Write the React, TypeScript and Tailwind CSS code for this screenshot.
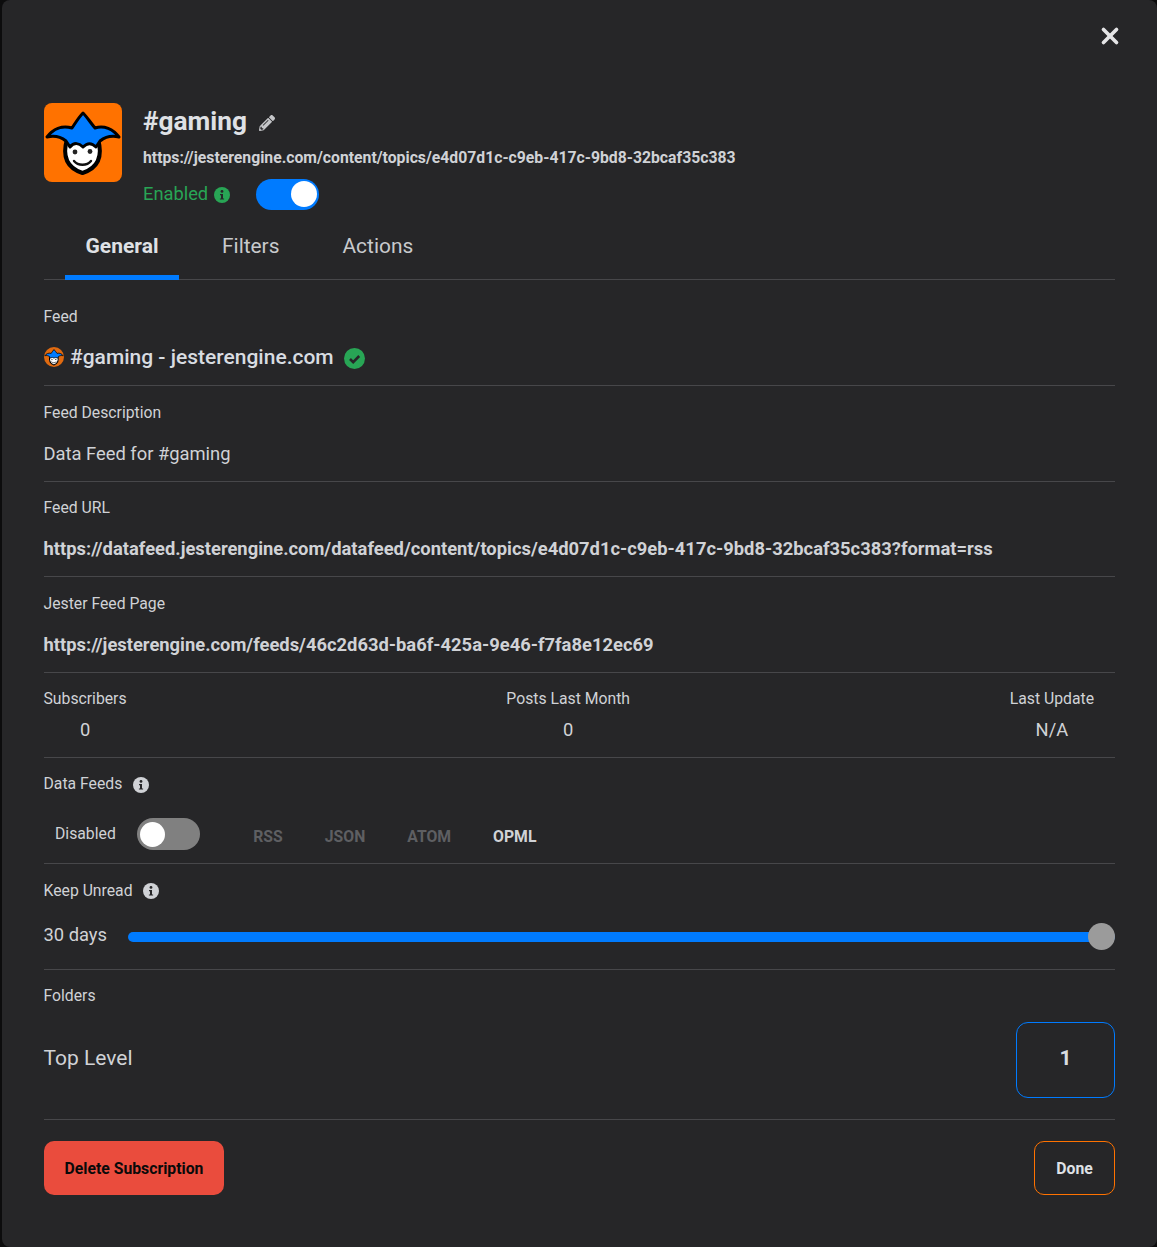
import React from "react";
import { X } from "lucide-react";
import { FaPencilAlt } from "react-icons/fa";

function Jester({ size = 78 }: { size?: number }) {
  return (
    <svg width={size} height={size} viewBox="0 0 78 78" className="block">
      <path d="M23 36 C19 50 20 64 38.5 70 C57 64 58 50 54 36 Z" fill="#fff" stroke="#000" strokeWidth="4" strokeLinejoin="round" />
      <path d="M3 34 C9 26 18 22 28 25 C32 19 35 14 39 10 C43 14 46 19 51 25 C60 22 69 26 75 34 C67 32 61 34 56 38 L52 44 C47 39 43 40 39 44 C35 40 30 39 26 44 L22 38 C17 34 11 32 3 34 Z" fill="#007bff" stroke="#000" strokeWidth="3" strokeLinejoin="round" />
      <circle cx="31" cy="49" r="2.4" fill="#222" />
      <circle cx="46" cy="48.5" r="2.4" fill="#222" />
      <path d="M30 58 C34 63 43 63 47 58" fill="none" stroke="#111" strokeWidth="2.4" strokeLinecap="round" />
    </svg>
  );
}

function Info({ color, size = 16 }: { color: string; size?: number }) {
  return (
    <svg width={size} height={size} viewBox="0 0 16 16" className="block shrink-0">
      <circle cx="8" cy="8" r="8" fill={color} />
      <circle cx="8" cy="4.4" r="1.4" fill="#262628" />
      <path d="M6 7h3v4.4h1.1v1.2H5.9v-1.2H7V8.2H6z" fill="#262628" />
    </svg>
  );
}

function Label({ children }: { children: React.ReactNode }) {
  return <div className="ml-[-0.5px] text-[15.75px] leading-[20px] text-[#d0d2d6]">{children}</div>;
}

function Row({ className, children }: { className: string; children: React.ReactNode }) {
  return <div className={`border-b border-[#47474a] ${className}`}>{children}</div>;
}

export default function App() {
  return (
    <div className="h-[1247px] w-[1157px] bg-[#0c0c0d] pl-[2px] font-['Roboto',sans-serif]">
      <div className="relative h-[1247px] rounded-[8px] bg-[#262628] px-[42px] text-[#dfe1e5]">
        <button className="absolute right-[34px] top-[23px] text-[#e4e4e6]">
          <X size={26} strokeWidth={3.4} />
        </button>

        <div className="h-[103px]" />
        <div className="flex h-[107px] gap-[21px]">
          <div className="h-[79px] w-[78px] overflow-hidden rounded-[8px] bg-[#ff7200]">
            <Jester />
          </div>
          <div className="flex flex-col">
            <div className="flex h-[36px] items-center">
              <span className="text-[26.25px] font-bold leading-[36px]">#gaming</span>
              <FaPencilAlt size={16} className="ml-[12px] mt-[3px] text-[#c4c5c8]" />
            </div>
            <div className="mt-[8px] h-[20px] text-[15.75px] font-bold leading-[22px] text-[#d0d2d6]">
              https://jesterengine.com/content/topics/e4d07d1c-c9eb-417c-9bd8-32bcaf35c383
            </div>
            <div className="mt-[11px] flex h-[33px] items-center">
              <span className="text-[18.3px] leading-[22px] text-[#28a555]">Enabled</span>
              <span className="ml-[6px] mt-[1px]"><Info color="#28a555" /></span>
              <div className="ml-[26px] flex h-[31px] w-[63px] items-center justify-end rounded-full bg-[#007bff] pr-[2px]">
                <div className="h-[26px] w-[26px] rounded-full bg-white" />
              </div>
            </div>
          </div>
        </div>

        <div className="flex h-[70px] border-b border-[#47474a] pl-[21px] text-[20.9px]">
          <div className="flex h-[70px] w-[114px] justify-center border-b-[5px] border-[#007bff] pt-[23px] text-[21px] font-bold leading-[26px]">General</div>
          <div className="ml-[43px] pt-[23px] leading-[26px] text-[#c8cacd]">Filters</div>
          <div className="ml-[63px] pt-[23px] leading-[26px] text-[#c8cacd]">Actions</div>
        </div>

        <Row className="h-[106px] pt-[27px]">
          <Label>Feed</Label>
          <div className="mt-[17px] flex items-center">
            <div className="h-[20px] w-[20px] overflow-hidden rounded-full bg-[#e06a10]"><Jester size={20} /></div>
            <span className="ml-[6px] text-[21px] font-medium leading-[26px] text-[#d8dce1]">#gaming - jesterengine.com</span>
            <svg width="21" height="21" viewBox="0 0 21 21" className="ml-[10.5px] mt-[2px]">
              <circle cx="10.5" cy="10.5" r="10.5" fill="#28a555" />
              <path d="M6 11l3.2 3.2L15.2 8" fill="none" stroke="#262628" strokeWidth="2.6" />
            </svg>
          </div>
        </Row>

        <Row className="h-[96px] pt-[17px]">
          <Label>Feed Description</Label>
          <div className="ml-[-0.5px] mt-[19px] text-[18.35px] leading-[24px] text-[#d0d2d6]">Data Feed for #gaming</div>
        </Row>

        <Row className="h-[95px] pt-[16px]">
          <Label>Feed URL</Label>
          <div className="ml-[-0.5px] mt-[19px] text-[18.36px] font-bold leading-[24px] text-[#d0d2d6]">
            https://datafeed.jesterengine.com/datafeed/content/topics/e4d07d1c-c9eb-417c-9bd8-32bcaf35c383?format=rss
          </div>
        </Row>

        <Row className="h-[96px] pt-[17px]">
          <Label>Jester Feed Page</Label>
          <div className="ml-[-0.5px] mt-[19px] text-[18.36px] font-bold leading-[24px] text-[#d0d2d6]">
            https://jesterengine.com/feeds/46c2d63d-ba6f-425a-9e46-f7fa8e12ec69
          </div>
        </Row>

        <Row className="flex h-[85px] justify-between pr-[21px] pt-[16px]">
          {[["Subscribers", "0"], ["Posts Last Month", "0"], ["Last Update", "N/A"]].map(([a, b]) => (
            <div key={a} className="flex flex-col items-center">
              <Label>{a}</Label>
              <div className="ml-[-0.5px] mt-[9px] text-[18.35px] leading-[24px] text-[#d0d2d6]">{b}</div>
            </div>
          ))}
        </Row>

        <Row className="h-[106px] pt-[16px]">
          <div className="flex items-center gap-[10.5px]">
            <Label>Data Feeds</Label>
            <span className="mt-[1px]"><Info color="#d0d2d6" /></span>
          </div>
          <div className="mt-[24px] flex h-[32px] items-center pl-[11px]">
            <span className="text-[15.75px] leading-[20px] text-[#d0d2d6]">Disabled</span>
            <div className="ml-[21px] flex h-[32px] w-[63px] items-center rounded-full bg-[#808080] pl-[3px]">
              <div className="h-[25px] w-[25px] rounded-full bg-white" />
            </div>
            <div className="ml-[53.5px] mt-[5px] flex text-[15.75px] font-bold leading-[20px] text-[#5e5f62]">
              <span>RSS</span>
              <span className="ml-[42px]">JSON</span>
              <span className="ml-[42px]">ATOM</span>
              <span className="ml-[42px] text-[#d0d2d6]">OPML</span>
            </div>
          </div>
        </Row>

        <Row className="h-[106px] pt-[17px]">
          <div className="flex items-center gap-[10.5px]">
            <Label>Keep Unread</Label>
            <Info color="#d0d2d6" />
          </div>
          <div className="mt-[20px] flex h-[32px] items-center">
            <span className="mb-[5px] ml-[-0.5px] w-[84.5px] text-[18.35px] leading-[24px] text-[#d0d2d6]">30 days</span>
            <div className="relative h-[10px] flex-1 rounded-full bg-[#007bff]">
              <div className="absolute right-0 top-[-9px] h-[27px] w-[27px] rounded-full bg-[#9b9b9b]" />
            </div>
          </div>
        </Row>

        <Row className="h-[150px] pt-[16px]">
          <Label>Folders</Label>
          <div className="mt-[16px] flex items-center justify-between">
            <span className="mb-[4px] ml-[-0.5px] text-[21px] leading-[26px] text-[#d0d2d6]">Top Level</span>
            <div className="flex h-[76px] w-[99px] items-center justify-center rounded-[12px] border border-[#007bff] pb-[2px] text-[21px] font-bold text-[#d8dce1]">1</div>
          </div>
        </Row>

        <div className="flex justify-between pt-[21px]">
          <button className="h-[54px] w-[180px] rounded-[10px] bg-[#ea4c3d] pt-[1px] text-[15.75px] font-bold text-[#0a0a0a]">Delete Subscription</button>
          <button className="h-[54px] w-[81px] rounded-[10px] border border-[#ff7200] pt-[1px] text-[15.75px] font-bold text-[#dfe1e5]">Done</button>
        </div>
      </div>
    </div>
  );
}
